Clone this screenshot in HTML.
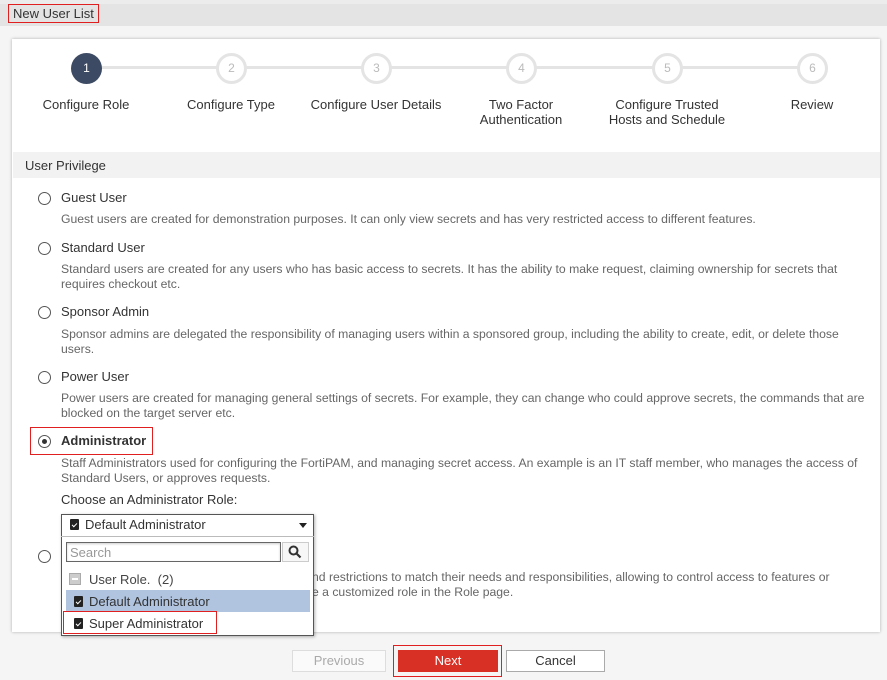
<!DOCTYPE html><html><head><style>
body{margin:0;width:887px;height:680px;background:#f5f5f5;font-family:"Liberation Sans",sans-serif;position:relative;overflow:hidden;color:#333}
.a{position:absolute;white-space:nowrap}
.top{position:absolute;left:0;top:0;width:887px;height:26px;background:#e4e4e4;border-top:4px solid #ececec;box-sizing:border-box}
.card{position:absolute;left:12px;top:39px;width:868px;height:593px;background:#fff;box-shadow:0 0 3px rgba(0,0,0,.3)}
.c{position:absolute;width:28px;height:28px;border-radius:50%;border:3px solid #e4e4e4;box-sizing:border-box;background:#fff;color:#bbb;font-size:12px;text-align:center;line-height:22px}
.ln{position:absolute;height:3px;background:#e4e4e4;top:66px}
.lab{position:absolute;font-size:13px;color:#333;text-align:center;width:160px;line-height:15px}
.r{position:absolute;width:11px;height:11px;border:1px solid #555;border-radius:50%;background:#fff}
.t{font-size:13px;color:#333}
.d{font-size:12.2px;color:#666;line-height:15px}
.clip{display:inline-block;width:9px;height:11px;background:#222;border-radius:1px;vertical-align:-1px;margin-right:6px;position:relative}
.clip:after{content:"";position:absolute;left:2px;top:4px;width:4px;height:2px;border-left:1.5px solid #fff;border-bottom:1.5px solid #fff;transform:rotate(-45deg)}
</style></head><body>
<div class="top"></div>
<div class="a" style="left:8px;top:4px;width:91px;height:19px;border:1.5px solid #e02020;box-sizing:border-box"></div>
<div class="a t" style="left:13px;top:6px">New User List</div>
<div class="card"></div>
<div class="ln" style="left:100px;width:117px"></div><div class="ln" style="left:245px;width:117px"></div><div class="ln" style="left:390px;width:117px"></div><div class="ln" style="left:535px;width:118px"></div><div class="ln" style="left:681px;width:117px"></div>
<div class="c" style="left:71px;top:53px;width:31px;height:31px;border:none;background:#3c4a63;color:#fff;line-height:31px">1</div>
<div class="c" style="left:216px;top:53px;width:31px;height:31px;line-height:25px">2</div>
<div class="c" style="left:361px;top:53px;width:31px;height:31px;line-height:25px">3</div>
<div class="c" style="left:506px;top:53px;width:31px;height:31px;line-height:25px">4</div>
<div class="c" style="left:652px;top:53px;width:31px;height:31px;line-height:25px">5</div>
<div class="c" style="left:797px;top:53px;width:31px;height:31px;line-height:25px">6</div>
<div class="lab" style="left:6px;top:97px">Configure Role</div>
<div class="lab" style="left:151px;top:97px">Configure Type</div>
<div class="lab" style="left:296px;top:97px">Configure User Details</div>
<div class="lab" style="left:441px;top:97px">Two Factor<br>Authentication</div>
<div class="lab" style="left:587px;top:97px">Configure Trusted<br>Hosts and Schedule</div>
<div class="lab" style="left:732px;top:97px">Review</div>
<div class="a" style="left:13px;top:152px;width:867px;height:26px;background:#f2f2f2"></div>
<div class="a t" style="left:25px;top:158px">User Privilege</div>

<div class="r" style="left:38px;top:192px"></div><div class="a t" style="left:61px;top:190px">Guest User</div>
<div class="a d" style="left:61px;top:212px">Guest users are created for demonstration purposes. It can only view secrets and has very restricted access to different features.</div>
<div class="r" style="left:38px;top:242px"></div><div class="a t" style="left:61px;top:240px">Standard User</div>
<div class="a d" style="left:61px;top:262px">Standard users are created for any users who has basic access to secrets. It has the ability to make request, claiming ownership for secrets that<br>requires checkout etc.</div>
<div class="r" style="left:38px;top:306px"></div><div class="a t" style="left:61px;top:304px">Sponsor Admin</div>
<div class="a d" style="left:61px;top:327px">Sponsor admins are delegated the responsibility of managing users within a sponsored group, including the ability to create, edit, or delete those<br>users.</div>
<div class="r" style="left:38px;top:371px"></div><div class="a t" style="left:61px;top:369px">Power User</div>
<div class="a d" style="left:61px;top:391px">Power users are created for managing general settings of secrets. For example, they can change who could approve secrets, the commands that are<br>blocked on the target server etc.</div>
<div class="a" style="left:30px;top:427px;width:123px;height:28px;border:1.5px solid #e02020;box-sizing:border-box"></div>
<div class="r" style="left:38px;top:435px"></div><div class="a" style="left:42px;top:439px;width:5px;height:5px;border-radius:50%;background:#333"></div>
<div class="a t" style="left:61px;top:433px;font-weight:bold">Administrator</div>
<div class="a d" style="left:61px;top:456px">Staff Administrators used for configuring the FortiPAM, and managing secret access. An example is an IT staff member, who manages the access of<br>Standard Users, or approves requests.</div>
<div class="a t" style="left:61px;top:492px">Choose an Administrator Role:</div>
<div class="r" style="left:38px;top:550px"></div>
<div class="a d" style="left:312px;top:570px">nd restrictions to match their needs and responsibilities, allowing to control access to features or<br>e a customized role in the Role page.</div>

<div class="a" style="left:61px;top:514px;width:253px;height:122px;background:#fff;border:1px solid #555;box-sizing:border-box;box-shadow:1px 1px 3px rgba(0,0,0,.3)"></div>
<div class="a" style="left:61px;top:536px;width:253px;height:1px;background:#bbb"></div>
<div class="a t" style="left:70px;top:517px"><span class="clip"></span>Default Administrator</div>
<div class="a" style="left:299px;top:523px;border-left:4px solid transparent;border-right:4px solid transparent;border-top:5px solid #222"></div>
<div class="a" style="left:66px;top:542px;width:215px;height:20px;border:1px solid #666;box-sizing:border-box;box-shadow:inset 0 1px 2px rgba(0,0,0,.2)"></div>
<div class="a" style="left:70px;top:545px;font-size:13px;color:#999">Search</div>
<div class="a" style="left:282px;top:542px;width:27px;height:20px;border:1px solid #ccc;box-sizing:border-box;background:#f7f7f7"></div>
<svg class="a" style="left:288px;top:545px" width="14" height="14"><circle cx="5.5" cy="5.5" r="4" fill="none" stroke="#333" stroke-width="2"/><path d="M8.5 8.5L12.5 12.5" stroke="#333" stroke-width="2.2"/></svg>
<div class="a" style="left:69px;top:573px;width:12px;height:12px;background:#ccc;border:1px solid #aaa;box-sizing:border-box"></div>
<div class="a" style="left:72px;top:578px;width:6px;height:2px;background:#fff"></div>
<div class="a t" style="left:89px;top:572px;color:#444">User Role.&nbsp; (2)</div>
<div class="a" style="left:66px;top:590px;width:244px;height:22px;background:#b0c4e0"></div>
<div class="a t" style="left:74px;top:594px"><span class="clip"></span>Default Administrator</div>
<div class="a" style="left:63px;top:611px;width:154px;height:23px;border:1.5px solid #e02020;box-sizing:border-box"></div>
<div class="a t" style="left:74px;top:616px"><span class="clip"></span>Super Administrator</div>

<div class="a" style="left:292px;top:650px;width:94px;height:22px;border:1px solid #ddd;box-sizing:border-box;background:#fafafa;color:#aaa;font-size:13px;text-align:center;line-height:20px">Previous</div>
<div class="a" style="left:393px;top:645px;width:109px;height:32px;border:1.5px solid #e02020;box-sizing:border-box"></div>
<div class="a" style="left:398px;top:650px;width:100px;height:22px;background:#d93025;color:#fff;font-size:13px;text-align:center;line-height:22px">Next</div>
<div class="a" style="left:506px;top:650px;width:99px;height:22px;border:1px solid #aaa;box-sizing:border-box;background:#fff;color:#333;font-size:13px;text-align:center;line-height:20px">Cancel</div>
</body></html>
